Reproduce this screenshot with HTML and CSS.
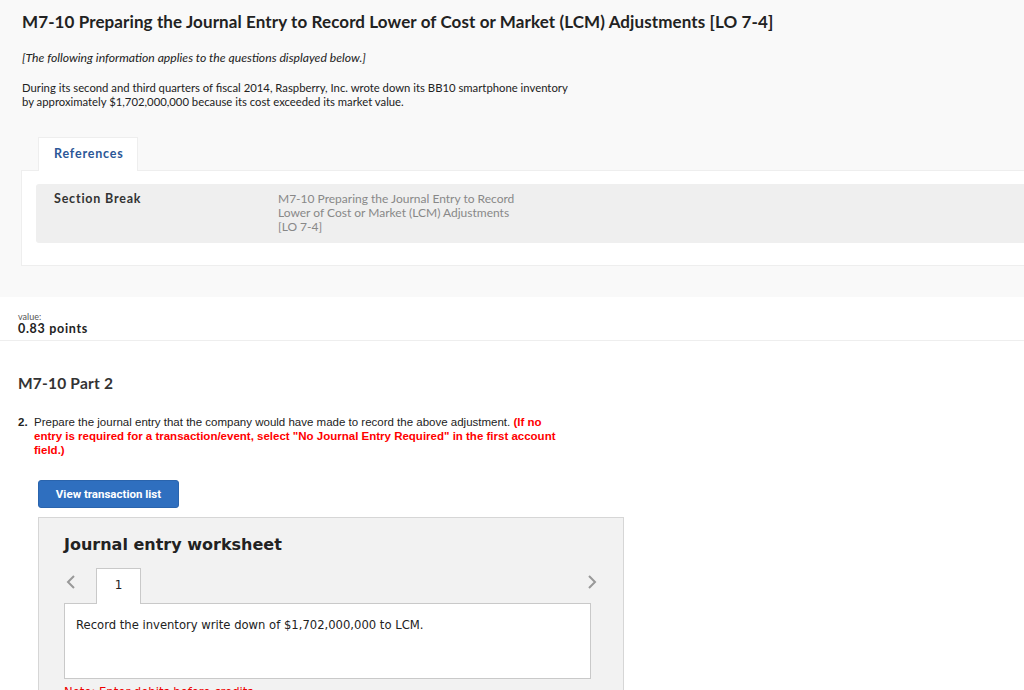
FILE: index.html
```html
<!DOCTYPE html>
<html lang="en">
<head>
    <meta charset="UTF-8">
    <title>M7-10 Part 2</title>
    <link rel="stylesheet" href="styles.css">
</head>
<body>
<section class="intro">
    <h1 class="title">M7-10 Preparing the Journal Entry to Record Lower of Cost or Market (LCM) Adjustments [LO 7-4]</h1>
    <p class="note">[The following information applies to the questions displayed below.]</p>
    <p class="story">During its second and third quarters of fiscal 2014, Raspberry, Inc. wrote down its BB10 smartphone inventory<br>by approximately $1,702,000,000 because its cost exceeded its market value.</p>

    <div class="refs">
        <div class="tab">References</div>
        <div class="ref-panel">
            <div class="ref-row">
                <span class="ref-label">Section Break</span>
                <span class="ref-text">M7-10 Preparing the Journal Entry to Record<br>Lower of Cost or Market (LCM) Adjustments<br>[LO 7-4]</span>
            </div>
        </div>
    </div>
</section>

<div class="points">
    <div class="value">value:</div>
    <div class="score">0.83 points</div>
</div>

<main class="question">
    <h2 class="part">M7-10 Part 2</h2>
    <div class="prompt">
        <span class="num">2.</span>
        <p>Prepare the journal entry that the company would have made to record the above adjustment. <b class="warn">(If no entry is required for a transaction/event, select "No Journal Entry Required" in the first account field.)</b></p>
    </div>

    <button class="list-btn">View transaction list</button>

    <div class="worksheet">
        <h3>Journal entry worksheet</h3>
        <div class="tabs">
            <span class="arrow">
                <svg width="10" height="16" viewBox="0 0 10 16"><path d="M8 2 L2 8 L8 14" fill="none" stroke="#999" stroke-width="2"/></svg>
            </span>
            <span class="step">1</span>
            <span class="arrow right">
                <svg width="10" height="16" viewBox="0 0 10 16"><path d="M2 2 L8 8 L2 14" fill="none" stroke="#999" stroke-width="2"/></svg>
            </span>
        </div>
        <div class="entry">Record the inventory write down of $1,702,000,000 to LCM.</div>
        <p class="red-note">Note: Enter debits before credits.</p>
    </div>
</main>
</body>
</html>
```
FILE: styles.css
```css
body {
    margin: 0;
    font-family: "Lato", "Liberation Sans", sans-serif;
    color: #222;
    background: #fff;
    overflow: hidden;
}

.intro {
    background: #f9f9f9;
    padding: 12px 0 31px 22px;
}

.title {
    font-size: 17px;
    font-weight: bold;
    margin: 0;
    line-height: 20px;
    letter-spacing: 0.1px;
}

.note {
    font-style: italic;
    font-size: 12.2px;
    margin: 18px 0 0;
    line-height: 16px;
}

.story {
    font-size: 11.3px;
    line-height: 14px;
    margin: 15px 0 0;
}

.refs {
    margin-top: 27px;
    margin-left: -1px;
}

.tab {
    display: inline-block;
    margin-left: 17px;
    padding: 0 14px 0 15px;
    height: 33px;
    line-height: 32px;
    background: #fff;
    border: 1px solid #eee;
    border-bottom: none;
    color: #2b5797;
    font-weight: bold;
    font-size: 12.5px;
    letter-spacing: 0.8px;
    position: relative;
    top: 1px;
}

.ref-panel {
    background: #fff;
    border: 1px solid #eee;
    border-right: none;
    padding: 13px 0 22px 14px;
}

.ref-row {
    display: flex;
    background: #efefef;
    border-radius: 3px 0 0 3px;
    padding: 8px 0 9px 18px;
    font-size: 12px;
    line-height: 14px;
}

.ref-label {
    width: 224px;
    font-weight: bold;
    font-size: 12.5px;
    letter-spacing: 0.8px;
    color: #333;
}

.ref-text {
    color: #888;
}

.points {
    padding: 14px 18px 4px;
    border-bottom: 1px solid #eee;
}

.value {
    font-size: 9px;
    color: #555;
    line-height: 11px;
}

.score {
    font-size: 12.5px;
    font-weight: bold;
    letter-spacing: 0.7px;
    line-height: 14px;
}

.question {
    padding: 32px 18px 0;
}

.part {
    font-size: 15.5px;
    font-weight: bold;
    letter-spacing: 0.2px;
    color: #333;
    margin: 0;
    line-height: 20px;
}

.prompt {
    display: flex;
    margin-top: 22px;
    font-family: "Liberation Sans", Arial, sans-serif;
    font-size: 11.5px;
    line-height: 14px;
    width: 544px;
}

.num {
    font-weight: bold;
    width: 16px;
    flex-shrink: 0;
}

.prompt p {
    margin: 0;
}

.warn {
    color: #f00;
}

.list-btn {
    display: block;
    margin: 23px 0 0 20px;
    width: 141px;
    height: 28px;
    background: #2f6fbf;
    color: #fff;
    border: 1px solid #2a64ad;
    border-radius: 3px;
    font-family: "Roboto", sans-serif;
    font-weight: bold;
    font-size: 11.5px;
    padding: 0;
}

.worksheet {
    margin: 9px 0 0 20px;
    width: 527px;
    background: #f2f2f2;
    border: 1px solid #d6d6d6;
    padding: 16px 32px 0 25px;
    height: 200px;
}

.worksheet h3 {
    font-family: "DejaVu Sans", Verdana, sans-serif;
    font-size: 16px;
    margin: 0;
    line-height: 22px;
}

.tabs {
    display: flex;
    align-items: flex-start;
    margin-top: 11px;
    height: 36px;
    position: relative;
    top: 1px;
}

.arrow {
    width: 30px;
    padding: 6px 0 0 2px;
    display: flex;
}

.arrow.right {
    margin-left: auto;
    margin-right: -6px;
    width: auto;
}

.step {
    width: 43px;
    height: 35px;
    line-height: 32px;
    text-align: center;
    background: #fff;
    border: 1px solid #c9c9c9;
    border-bottom: none;
    font-family: "DejaVu Sans", sans-serif;
    font-size: 12px;
    align-self: flex-end;
}

.entry {
    background: #fff;
    border: 1px solid #c9c9c9;
    height: 76px;
    padding: 14px 11px 0;
    box-sizing: border-box;
    font-family: "DejaVu Sans", Verdana, sans-serif;
    font-size: 11.6px;
}

.red-note {
    color: #e00;
    font-family: "DejaVu Sans", sans-serif;
    font-size: 11.6px;
    margin: 6px 0 0;
}
```
